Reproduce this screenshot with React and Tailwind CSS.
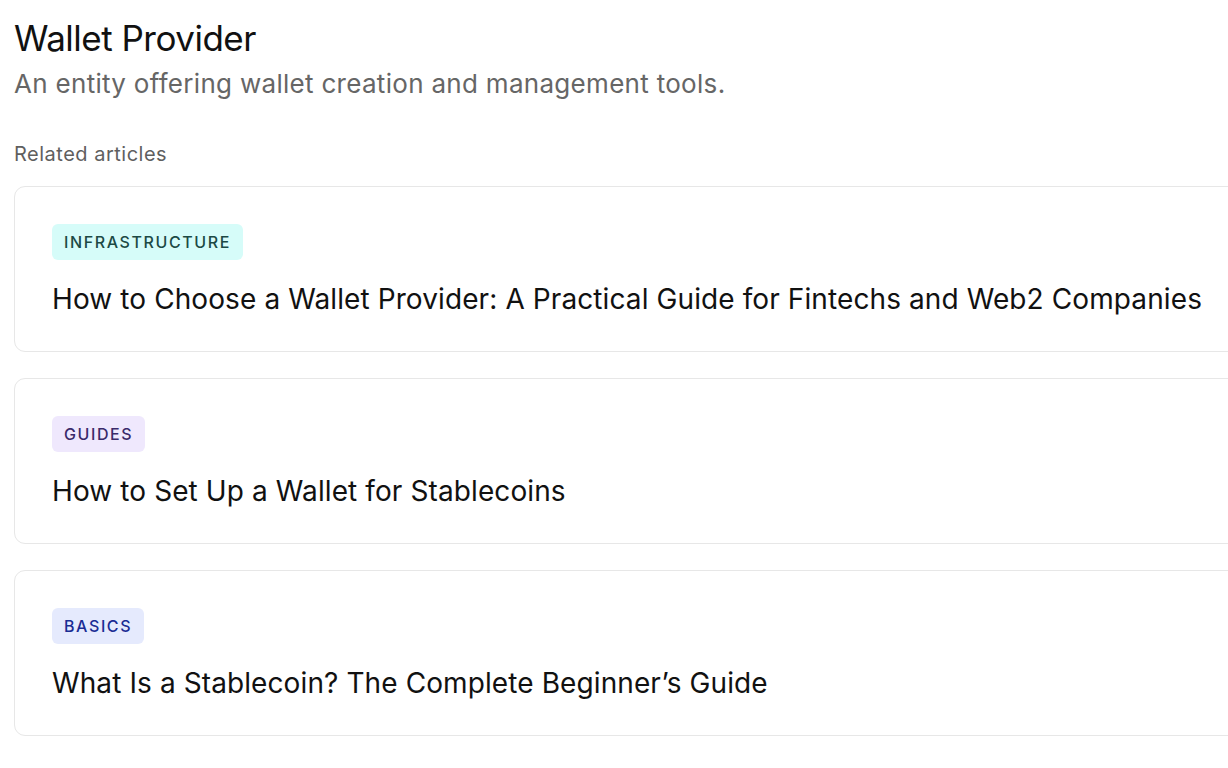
const articles = [
  {
    tag: "INFRASTRUCTURE",
    tagClass: "bg-[#d6fcf9] text-[#1c4a45]",
    title: "How to Choose a Wallet Provider: A Practical Guide for Fintechs and Web2 Companies",
  },
  {
    tag: "GUIDES",
    tagClass: "bg-[#efe8fd] text-[#3a2a6a]",
    title: "How to Set Up a Wallet for Stablecoins",
  },
  {
    tag: "BASICS",
    tagClass: "bg-[#e5eafd] text-[#1a2c94]",
    title: "What Is a Stablecoin? The Complete Beginner’s Guide",
  },
];

export default function App() {
  return (
    <div className="w-[1228px] h-[768px] overflow-hidden bg-white font-['Inter',sans-serif]">
      <div className="pl-[14px] pt-[17px] w-[1260px]">
        <h1 className="text-[35px] leading-[42px] text-[#111] tracking-[-0.5px]">Wallet Provider</h1>
        <p className="mt-[8px] text-[26px] leading-[34px] text-[#666] tracking-[0.3px]">
          An entity offering wallet creation and management tools.
        </p>

        <div className="mt-[40px] text-[20px] leading-[26px] text-[#5f5f5f] tracking-[0.5px]">
          Related articles
        </div>

        <div className="mt-[19px] flex flex-col gap-[26px]">
          {articles.map((a) => (
            <div
              key={a.tag}
              className="h-[166px] rounded-[11px] border border-[#e7e7e7] pl-[37px] pt-[37px]"
            >
              <span
                className={`inline-block rounded-[6px] px-[12px] h-[36px] leading-[36px] text-[16px] font-medium tracking-[1.6px] ${a.tagClass}`}
              >
                {a.tag}
              </span>
              <div className="mt-[19px] text-[28px] leading-[40px] text-[#111] tracking-[0.1px]">
                {a.title}
              </div>
            </div>
          ))}
        </div>
      </div>
    </div>
  );
}
